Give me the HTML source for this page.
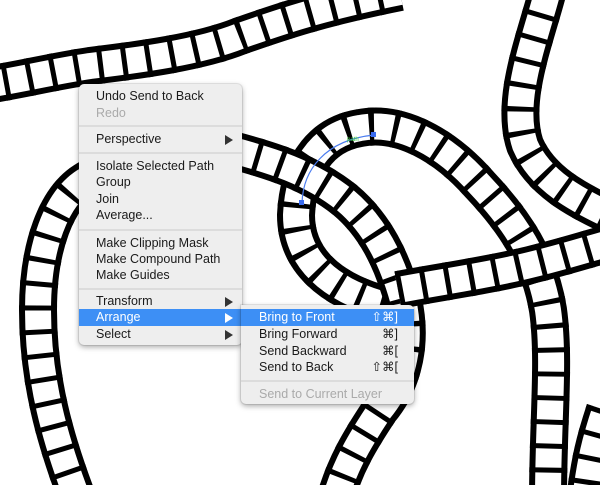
<!DOCTYPE html>
<html><head><meta charset="utf-8"><style>
html,body{margin:0;padding:0;width:600px;height:485px;overflow:hidden;background:#fff;font-family:"Liberation Sans",Arial,sans-serif;}
svg{position:absolute;left:0;top:0}
.menu{position:absolute;background:#eeeeee;border-radius:5px;box-shadow:0 2px 6px rgba(0,0,0,.35),0 0 0 1px rgba(0,0,0,.08);font-size:12.5px;color:#1a1a1a}
.it{position:absolute;left:0;right:0;height:17px;line-height:17px}
.it span{position:absolute}
.dis{color:#aaa}
.sep{position:absolute;left:0;right:0;height:2px;background:#dcdcdc}
.hl{background:#3d8ff5;color:#fff}
.ar{position:absolute;right:9px;top:4px;width:0;height:0;border-left:8px solid #333;border-top:5px solid transparent;border-bottom:5px solid transparent}
.hl .ar{border-left-color:#fff}
.sc{right:16px;}
</style></head><body>
<svg width="600" height="485" viewBox="0 0 600 485">
<defs>
<path id="A" d="M-20,86 C20,80 50,72 90,66 C140,60 200,52 240,36 C280,22 320,8 400,-8"/>
<path id="B" d="M90,178 C55,195 38,250 38,310 C38,380 55,440 78,500"/>
<path id="D" d="M232,150 C270,160 310,172 345,200 C375,225 392,260 403,300 C412,340 405,380 380,410 C360,440 345,465 335,500"/>
<path id="E" d="M385,305 C330,290 296,260 296,215 C298,170 318,135 360,128 C400,120 445,145 480,185 C515,222 540,260 548,310 C555,360 548,420 548,500"/>
<path id="F" d="M398,290 C440,282 490,275 530,265 C560,258 585,250 620,240"/>
<path id="G" d="M548,-10 C535,40 510,100 525,145 C540,180 575,200 620,220"/>
<path id="H" d="M605,410 C595,440 590,460 585,500"/>
</defs>
<g fill="none" stroke-linecap="butt">
<g><use href="#A" stroke="#000" stroke-width="38"/><use href="#A" stroke="#fff" stroke-width="26"/><use href="#A" stroke="#000" stroke-width="38" stroke-dasharray="5 19"/></g>
<g><use href="#B" stroke="#000" stroke-width="38"/><use href="#B" stroke="#fff" stroke-width="26"/><use href="#B" stroke="#000" stroke-width="38" stroke-dasharray="5 19"/></g>
<g><use href="#G" stroke="#000" stroke-width="38"/><use href="#G" stroke="#fff" stroke-width="26"/><use href="#G" stroke="#000" stroke-width="38" stroke-dasharray="5 19"/></g>
<g><use href="#H" stroke="#000" stroke-width="38"/><use href="#H" stroke="#fff" stroke-width="26"/><use href="#H" stroke="#000" stroke-width="38" stroke-dasharray="5 19"/></g>
<g><use href="#E" stroke="#000" stroke-width="38"/><use href="#E" stroke="#fff" stroke-width="26"/><use href="#E" stroke="#000" stroke-width="38" stroke-dasharray="5 19"/></g>
<g><use href="#D" stroke="#000" stroke-width="38"/><use href="#D" stroke="#fff" stroke-width="26"/><use href="#D" stroke="#000" stroke-width="38" stroke-dasharray="5 19"/></g>
<g><use href="#F" stroke="#000" stroke-width="38"/><use href="#F" stroke="#fff" stroke-width="26"/><use href="#F" stroke="#000" stroke-width="38" stroke-dasharray="5 19"/></g>
</g>
<path d="M302,203 C303,170 325,140 374,135" fill="none" stroke="#4a7cf0" stroke-width="1.2"/>
<rect x="299" y="200" width="5" height="5" fill="#3a6cf0"/>
<rect x="371" y="132" width="5" height="5" fill="#3a6cf0"/>
<text x="347" y="141" font-size="6" fill="#3c3" font-family="Liberation Sans">path</text>
</svg>

<div class="menu" style="left:79px;top:84px;width:163px;height:261px">
<div class="it" style="top:4px"><span style="left:17px">Undo Send to Back</span></div>
<div class="it dis" style="top:21px"><span style="left:17px">Redo</span></div>
<div class="sep" style="top:41px"></div>
<div class="it" style="top:47px"><span style="left:17px">Perspective</span><div class="ar"></div></div>
<div class="sep" style="top:68px"></div>
<div class="it" style="top:74px"><span style="left:17px">Isolate Selected Path</span></div>
<div class="it" style="top:90px"><span style="left:17px">Group</span></div>
<div class="it" style="top:107px"><span style="left:17px">Join</span></div>
<div class="it" style="top:123px"><span style="left:17px">Average...</span></div>
<div class="sep" style="top:145px"></div>
<div class="it" style="top:151px"><span style="left:17px">Make Clipping Mask</span></div>
<div class="it" style="top:167px"><span style="left:17px">Make Compound Path</span></div>
<div class="it" style="top:183px"><span style="left:17px">Make Guides</span></div>
<div class="sep" style="top:204px"></div>
<div class="it" style="top:209px"><span style="left:17px">Transform</span><div class="ar"></div></div>
<div class="it hl" style="top:225px"><span style="left:17px">Arrange</span><div class="ar"></div></div>
<div class="it" style="top:242px"><span style="left:17px">Select</span><div class="ar"></div></div>
</div>

<div class="menu" style="left:241px;top:305px;width:173px;height:99px;border-top-left-radius:0">
<div class="it hl" style="top:4px"><span style="left:18px">Bring to Front</span><span class="sc">⇧⌘]</span></div>
<div class="it" style="top:21px"><span style="left:18px">Bring Forward</span><span class="sc">⌘]</span></div>
<div class="it" style="top:38px"><span style="left:18px">Send Backward</span><span class="sc">⌘[</span></div>
<div class="it" style="top:54px"><span style="left:18px">Send to Back</span><span class="sc">⇧⌘[</span></div>
<div class="sep" style="top:75px"></div>
<div class="it dis" style="top:81px"><span style="left:18px">Send to Current Layer</span></div>
</div>
</body></html>
